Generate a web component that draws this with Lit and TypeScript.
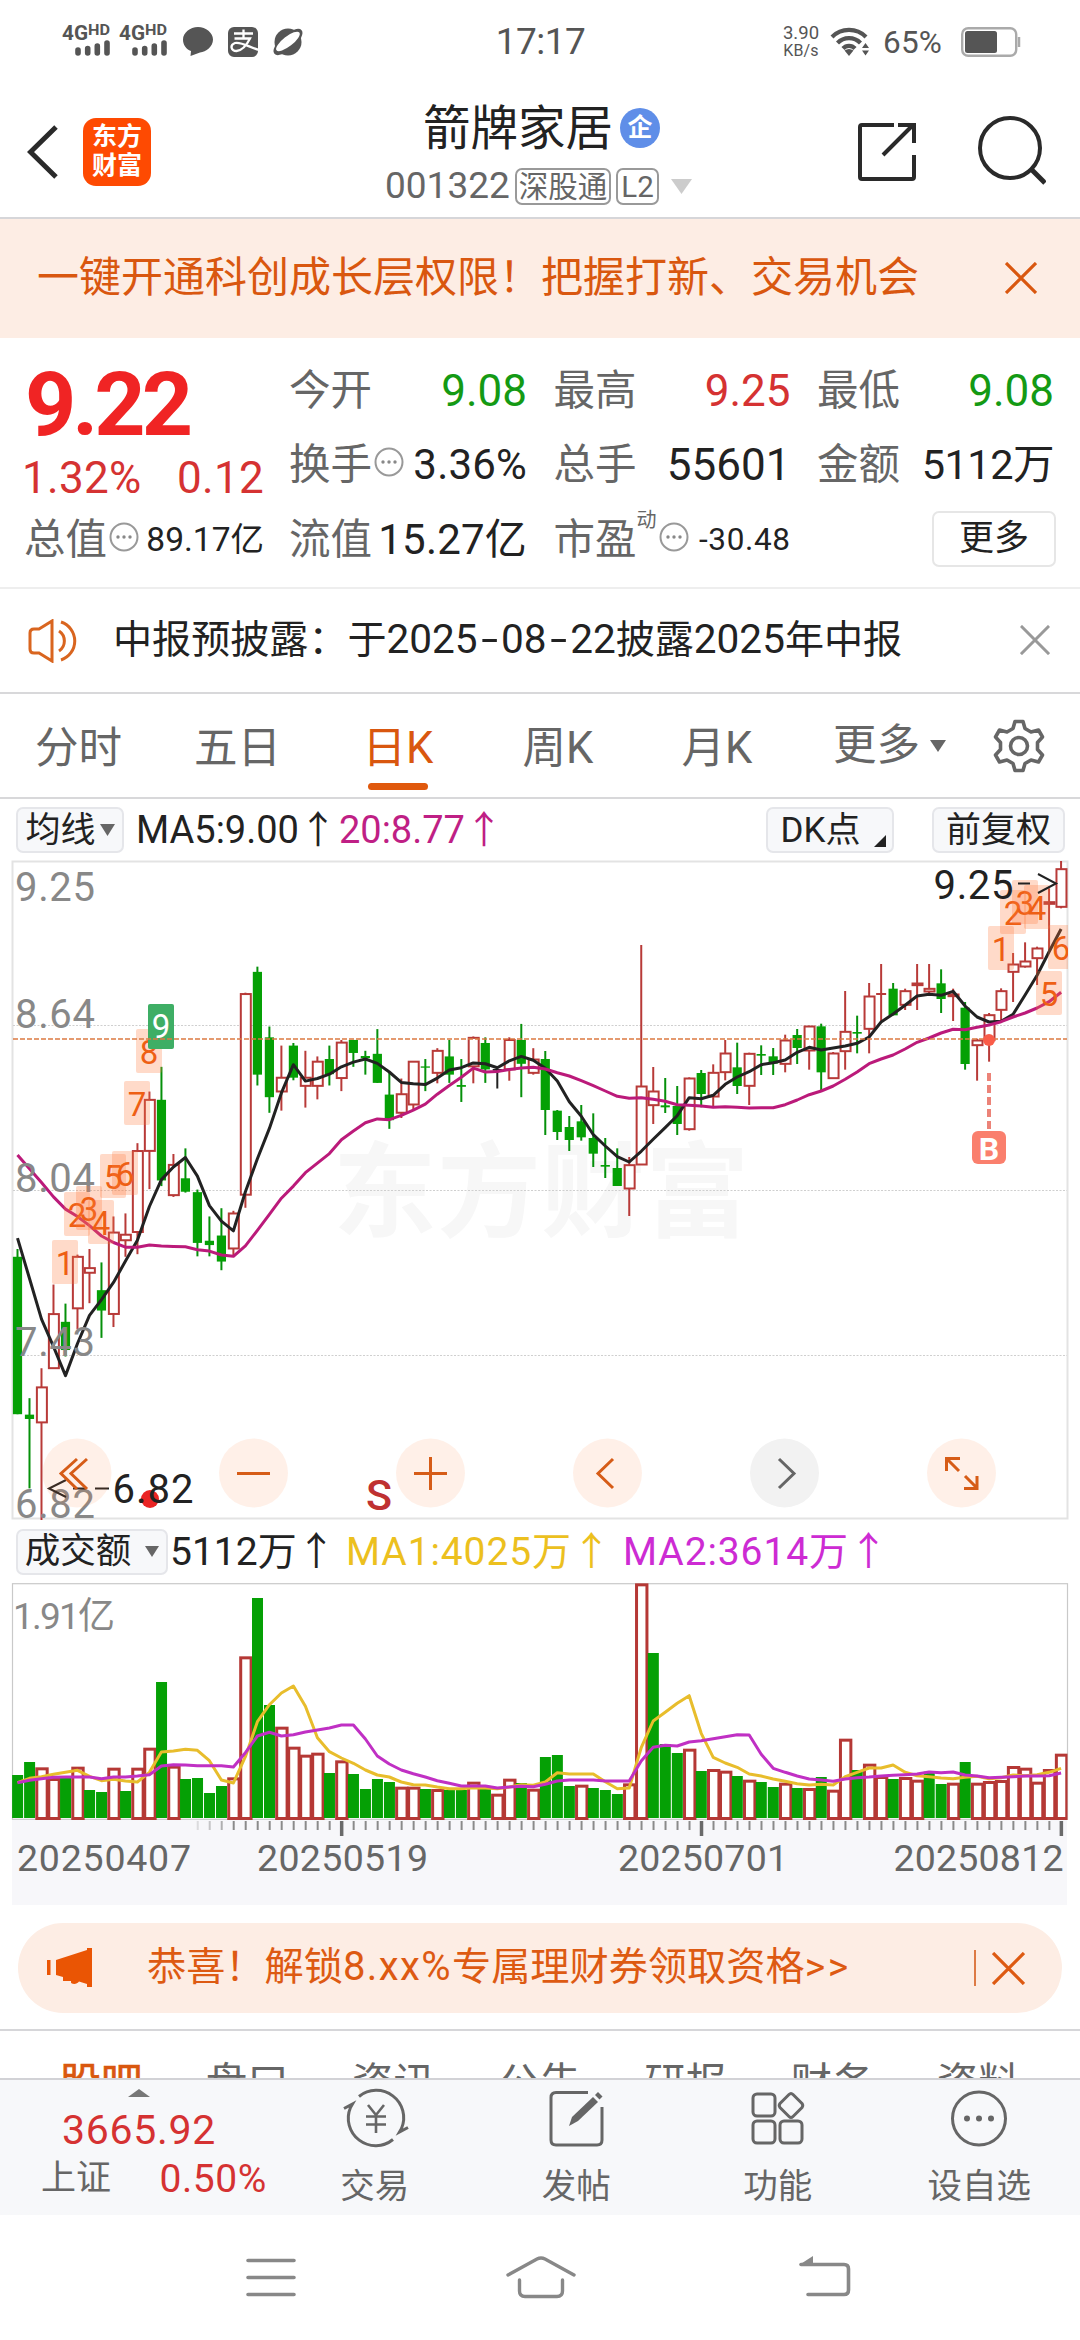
import { LitElement, html, svg, css } from "lit";
import { customElement } from "lit/decorators.js";

const STEP = 11.995;
const FIRST_X = 17.5;
const xAt = (i: number) => FIRST_X + i * STEP;

type Row = [string, number, number, number, number];
interface Candle { kind: string; high: number; top: number; bottom: number; low: number; }

// Sessions are kept as [kind, high, body top, body bottom, low] in grid units below the y = 850 line.
const UNIT_A = 0.43367;
const UNIT_B = 1 / 3;

const SESSIONS_A: Row[] = [
  ["g", 920, 938, 1301, 1301], ["g", 1264, 1302, 1312, 1472], ["r", 1195, 1238, 1321, 1545], ["r", 1002, 1069, 1196, 1196],
  ["g", 1046, 1088, 1153, 1168], ["r", 933, 937, 1058, 1105], ["r", 920, 963, 976, 1045], ["g", 951, 1015, 1062, 1125],
  ["r", 845, 881, 1071, 1100], ["r", 838, 886, 901, 938], ["r", 676, 693, 882, 932], ["r", 557, 575, 695, 782],
  ["g", 500, 576, 762, 775], ["r", 701, 725, 797, 800], ["g", 688, 757, 788, 790], ["g", 783, 789, 906, 937],
  ["g", 845, 901, 911, 937], ["g", 826, 889, 949, 969], ["r", 832, 837, 920, 934], ["r", 329, 331, 796, 825],
  ["g", 269, 281, 518, 543], ["g", 407, 432, 570, 606], ["r", 451, 524, 558, 601], ["g", 445, 451, 525, 531],
  ["r", 463, 524, 545, 594], ["r", 476, 487, 545, 575], ["g", 451, 482, 517, 543], ["r", 438, 443, 527, 556],
  ["g", 438, 438, 468, 500], ["g", 463, 475, 480, 518], ["g", 413, 470, 537, 537], ["g", 512, 564, 623, 643],
  ["r", 527, 562, 607, 618], ["r", 487, 487, 588, 600], ["g", 482, 499, 502, 556], ["r", 457, 462, 515, 538],
  ["g", 438, 476, 518, 537], ["g", 482, 542, 546, 581], ["r", 430, 432, 500, 538], ["g", 432, 445, 506, 537],
  ["k", 505, 505, 509, 550], ["r", 432, 437, 507, 532], ["g", 401, 438, 493, 570], ["r", 457, 482, 515, 518],
];
const SESSIONS_B: Row[] = [
  ["g", 603, 627, 780, 855], ["g", 780, 782, 846, 870], ["g", 798, 831, 870, 903], ["g", 765, 814, 862, 872],
  ["g", 790, 864, 911, 951], ["g", 864, 945, 950, 984], ["g", 895, 954, 1008, 1008], ["r", 921, 944, 1017, 1098],
  ["r", 285, 708, 945, 945], ["r", 651, 723, 767, 822], ["g", 684, 766, 772, 789], ["g", 708, 768, 822, 855],
  ["r", 682, 684, 839, 842], ["g", 660, 669, 732, 772], ["r", 643, 667, 741, 770], ["r", 570, 609, 668, 691],
  ["g", 578, 652, 708, 732], ["r", 608, 610, 709, 765], ["g", 586, 612, 617, 675], ["g", 594, 619, 641, 675],
  ["r", 554, 570, 643, 667], ["g", 537, 555, 594, 642], ["r", 527, 528, 603, 659], ["g", 521, 529, 667, 722],
  ["r", 606, 609, 686, 686], ["r", 423, 544, 605, 659], ["g", 497, 546, 551, 610], ["r", 399, 438, 538, 610],
  ["r", 342, 432, 432, 515], ["g", 399, 416, 496, 496], ["r", 416, 422, 466, 480], ["r", 342, 399, 407, 480],
  ["r", 342, 415, 426, 436], ["g", 358, 400, 447, 489], ["r", 416, 432, 440, 513], ["g", 456, 473, 642, 659],
  ["r", 566, 570, 587, 692], ["r", 489, 494, 572, 635], ["r", 415, 422, 481, 510], ["r", 309, 342, 367, 456],
  ["r", 277, 333, 351, 353], ["r", 290, 294, 326, 405], ["r", 115, 155, 163, 300], ["r", 33, 56, 172, 175],
];
const scaleRows = (rows: Row[], unit: number): Candle[] =>
  rows.map(([kind, high, top, bottom, low]) => ({
    kind, high: 850 + high * unit, top: 850 + top * unit, bottom: 850 + bottom * unit, low: 850 + low * unit,
  }));
const CANDLES = [...scaleRows(SESSIONS_A, UNIT_A), ...scaleRows(SESSIONS_B, UNIT_B)];

const MA5_A = [895, 988, 1082, 1145, 1212, 1138, 1073, 1037, 997, 948, 900, 822, 760, 731, 709, 752, 820, 856, 878, 788, 712, 642, 560, 495, 533, 527, 517, 500, 489, 482, 492, 512, 536, 539, 541, 526, 507, 502, 491, 493, 502, 486, 476, 485];
const MA5_B = [655, 693, 755, 799, 854, 888, 920, 936, 904, 868, 833, 797, 743, 746, 736, 703, 681, 665, 644, 638, 630, 607, 592, 600, 594, 588, 580, 561, 516, 492, 466, 438, 433, 436, 424, 468, 501, 516, 514, 493, 435, 376, 305, 237];
const MA20_A = [703, 735, 767, 800, 828, 845, 866, 890, 905, 916, 916, 911, 913, 914, 915, 922, 925, 934, 937, 913, 877, 840, 803, 775, 744, 722, 700, 668, 648, 629, 620, 622, 612, 600, 586, 563, 543, 524, 503, 512, 511, 506, 503, 501];
const MA20_B = [657, 668, 678, 692, 707, 723, 739, 745, 743, 748, 754, 764, 766, 768, 772, 770, 772, 774, 773, 773, 764, 750, 734, 723, 708, 688, 666, 641, 627, 615, 597, 577, 564, 549, 538, 539, 532, 525, 515, 501, 489, 474, 455, 427];
const joinLine = (a: number[], b: number[]) =>
  [...a.map((v) => 850 + v * UNIT_A), ...b.map((v) => 850 + v * UNIT_B)]
    .map((y, i) => `${xAt(i).toFixed(1)},${y.toFixed(1)}`).join(" ");

// Turnover bars: tops in thirds of a pixel below y = 1570, one letter of colour per session.
const VOL = [615, 576, 592, 624, 622, 590, 660, 666, 593, 663, 593, 533, 336, 587, 627, 624, 669, 648, 622, 259, 84, 405, 470, 530, 554, 548, 609, 571, 612, 657, 627, 636, 650, 650, 657, 657, 660, 660, 635, 657, 671, 626, 639, 656, 561, 555, 648, 644, 654, 660, 672, 640, 40, 249, 522, 549, 536, 603, 597, 602, 618, 629, 636, 651, 638, 654, 654, 621, 659, 506, 600, 581, 618, 627, 621, 629, 605, 642, 638, 576, 638, 633, 630, 588, 593, 635, 597, 551];
const VOL_KIND = [
  "ggrrgrggrg", "rrgrggggrr", "ggrrrrgrgg", "ggrrgrggrg", "rrgrgggrgg",
  "grrgggrgrr", "grggrgrgrr", "grrgrrggrg", "rrrrrrrr",
].join("");
const VMA1 = [638, 625, 620, 613, 607, 601, 619, 632, 628, 633, 636, 607, 546, 543, 538, 541, 572, 630, 639, 560, 455, 404, 369, 348, 409, 503, 545, 564, 580, 600, 615, 621, 636, 644, 645, 651, 656, 656, 653, 654, 656, 651, 644, 646, 636, 608, 612, 612, 612, 635, 656, 654, 533, 453, 427, 400, 377, 490, 562, 579, 592, 612, 618, 627, 634, 641, 645, 643, 645, 620, 607, 594, 594, 585, 607, 617, 620, 624, 626, 622, 619, 626, 623, 615, 617, 614, 607, 595];
const VMA2 = [638, 631, 626, 622, 621, 621, 621, 626, 621, 621, 618, 614, 588, 584, 585, 587, 587, 587, 591, 548, 498, 487, 498, 494, 486, 480, 474, 465, 465, 507, 558, 582, 600, 611, 621, 632, 640, 648, 648, 648, 654, 651, 649, 650, 643, 633, 630, 630, 630, 633, 633, 633, 573, 532, 526, 528, 516, 512, 506, 500, 494, 495, 553, 595, 607, 618, 627, 630, 634, 627, 623, 621, 618, 616, 614, 612, 606, 608, 606, 615, 618, 623, 622, 620, 618, 618, 617, 609];
const volLine = (v: number[]) => v.map((y, i) => `${xAt(i).toFixed(1)},${(1570 + y / 3).toFixed(1)}`).join(" ");

// [label, left, top]
const COUNTS: [string, number, number][] = [
  ["1", 52, 1240], ["2", 64, 1192], ["3", 76, 1186], ["4", 88, 1200], ["5", 100, 1154], ["6", 112, 1151], ["7", 124, 1081], ["8", 136, 1029],
  ["1", 988, 926], ["2", 1000, 890], ["3", 1012, 880], ["4", 1024, 885], ["5", 1036, 971], ["6", 1048, 925],
];

const FONT = css`Roboto, "Noto Sans CJK SC", sans-serif`;

@customElement("kline-chart")
class KlineChart extends LitElement {
  static styles = css`
    :host { display: block; height: 659px; }
    svg { display: block; overflow: visible; font-family: ${FONT}; }
    .frame { fill: none; stroke: #e3e3e3; stroke-width: 2; }
    .grid { stroke: #cfcfcf; stroke-width: 1; stroke-dasharray: 2 1.5; }
    .prev { stroke: #dc7a42; stroke-width: 1.3; stroke-dasharray: 5 2; }
    .mark { font-size: 103.5px; font-weight: 700; fill: #f7f7f7; }
    .g { fill: #05a005; stroke: none; }
    .gl { stroke: #05900a; stroke-width: 2; }
    .r { fill: #fff; stroke: #b83a38; stroke-width: 2; }
    .rl { stroke: #b83a38; stroke-width: 2; }
    .k { fill: #222; }
    .kl { stroke: #222; stroke-width: 2; }
    .ma5, .ma20 { fill: none; stroke-width: 3; stroke-linejoin: round; }
    .ma5 { stroke: #222; }
    .ma20 { stroke: #bb1a7a; }
    .axis { font-size: 40px; fill: #888; }
    .note { font-size: 40px; fill: #222; }
    .cell { fill: #ff7a3c; fill-opacity: 0.28; }
    .count { font-size: 33px; fill: #ee5f14; text-anchor: middle; }
    .nine { fill: #3eae65; }
    .nine-t { font-size: 33px; fill: #fff; text-anchor: middle; }
    .sell { font-size: 43px; font-weight: 500; fill: #bf3131; }
    .buy { fill: #fa7f6d; }
    .buy-t { font-size: 32px; font-weight: 700; fill: #fff; text-anchor: middle; }
    .buy-l { stroke: #ec8378; stroke-width: 4; stroke-dasharray: 8 4; }
    .btn { fill: #ff7a30; fill-opacity: 0.11; }
    .btn-off { fill: #f2f2f2; }
    .ico { fill: none; stroke: #d65c17; stroke-width: 3; }
    .ico-off { fill: none; stroke: #666; stroke-width: 3; }
  `;
  private candle(c: Candle, i: number) {
    const x = xAt(i);
    const h = Math.max(c.bottom - c.top, 1);
    if (c.kind === "r") {
      return svg`<line class="rl" x1=${x} x2=${x} y1=${c.high} y2=${c.low}></line>
        ${h < 1.5
          ? svg`<line class="rl" x1=${x - 5} x2=${x + 5} y1=${c.top} y2=${c.top}></line>`
          : svg`<rect class="r" x=${x - 4.6} y=${c.top + 0.5} width="10" height=${Math.max(h - 1, 1)}></rect>`}`;
    }
    return svg`<line class=${c.kind + "l"} x1=${x} x2=${x} y1=${c.high} y2=${c.low}></line>
      <rect class=${c.kind} x=${x - 4.6} y=${c.top} width="9.2" height=${h}></rect>`;
  }
  render() {
    const axis: [string, number][] = [["9.25", 900.5], ["8.64", 1027.5], ["8.04", 1191.5], ["7.43", 1356], ["6.82", 1517.5]];
    return html`<svg width="1080" height="659" viewBox="0 861 1080 659">
      <defs><clipPath id="c"><rect x="12" y="861" width="1056" height="659"></rect></clipPath></defs>
      <text class="mark" x="333" y="1229" textLength="416">东方财富</text>
      <rect class="frame" x="12.5" y="861.5" width="1055" height="657"></rect>
      ${[1025.5, 1190.5, 1355.5].map((y) => svg`<line class="grid" x1="13" x2="1067" y1=${y} y2=${y}></line>`)}
      ${CANDLES.map((c, i) => this.candle(c, i))}
      <polyline class="ma5" points=${joinLine(MA5_A, MA5_B)}></polyline>
      <polyline class="ma20" points=${joinLine(MA20_A, MA20_B)}></polyline>
      ${axis.map(([t, y]) => svg`<text class="axis" x="15" y=${y} textLength="80">${t}</text>`)}
      <g clip-path="url(#c)">
        ${COUNTS.map(([t, x, y]) => svg`<rect class="cell" x=${x} y=${y} width="26" height="44" rx="2"></rect>
          <text class="count" x=${x + 13} y=${y + 35}>${t}</text>`)}
      </g>
      <rect class="nine" x="148" y="1004" width="26" height="45" rx="2"></rect>
      <text class="nine-t" x="161" y="1038">9</text>
      <line class="prev" x1="13" x2="1067" y1="1039" y2="1039"></line>
      <text class="note" x="933.500" y="899" textLength="80">9.25</text>
      <path class="kl" fill="none" d="M1018 883.500H1030M1038 874L1056 883.500L1038 893"></path>
      <circle cx="150" cy="1499" r="9" fill="#ea2424"></circle>
      <text class="note" x="112.500" y="1503" textLength="81">6.82</text>
      <path class="kl" fill="none" d="M66 1480L49 1488.500L66 1497M73 1488.500H86M95 1488.500H109"></path>
      <text class="sell" x="366" y="1510">S</text>
      <line class="buy-l" x1="989" x2="989" y1="1073" y2="1129"></line>
      <circle cx="989" cy="1040" r="6" fill="#fa5c48"></circle>
      <rect class="buy" x="972" y="1131" width="34" height="33" rx="6"></rect>
      <text class="buy-t" x="989" y="1160">B</text>
      ${[77, 253.5, 430.5, 607.5, 784.5, 961.5].map((x, i) => svg`<circle class=${i === 4 ? "btn-off" : "btn"} cx=${x} cy="1473" r="34.500"></circle>`)}
      <path class="ico" d="M77 1459L61 1473.500L77 1489M87 1459L71 1473.500L87 1489"></path>
      <path class="ico" d="M237 1473.500H270"></path>
      <path class="ico" d="M414 1473.500H447M430.500 1457V1490"></path>
      <path class="ico" d="M613 1459L598 1473.500L613 1488"></path>
      <path class="ico-off" d="M779 1459L794 1473.500L779 1488"></path>
      <path class="ico" d="M960 1458.500H946.500V1471M947 1459L959 1471M964 1488.500H977V1476M977 1488L965 1476"></path>
    </svg>`;
  }
}

@customElement("volume-chart")
class VolumeChart extends LitElement {
  static styles = css`
    :host { display: block; height: 322px; }
    svg { display: block; font-family: ${FONT}; }
    .frame { fill: none; stroke: #c9c9c9; stroke-width: 1.2; }
    .axis { fill: #f7f7fa; }
    .g { fill: #05a005; }
    .r { fill: #fff; stroke: #b53835; stroke-width: 3; }
    .m1, .m2 { fill: none; stroke-width: 3; stroke-linejoin: round; }
    .m1 { stroke: #e8bd2c; }
    .m2 { stroke: #c030c4; }
    .tick { stroke: #8a8a8a; stroke-width: 2; }
    .tick-lg { stroke: #6a6a6a; stroke-width: 3.500; }
    .cap { font-size: 37px; fill: #888; }
    .date { font-size: 37.5px; fill: #666; }
  `;
  render() {
    const dates: [string, number, number][] = [["20250407", 17, 174], ["20250519", 257, 171], ["20250701", 618, 170], ["20250812", 893.5, 170]];
    return html`<svg width="1080" height="322" viewBox="0 1583 1080 322">
      <defs><clipPath id="v"><rect x="12" y="1583" width="1055.500" height="237"></rect></clipPath></defs>
      <rect class="axis" x="12" y="1820" width="1055" height="85"></rect>
      <rect class="frame" x="12.500" y="1583.700" width="1055" height="235.600"></rect>
      <text class="cap" x="13" y="1629" textLength="102">1.91亿</text>
      <g clip-path="url(#v)">
        ${VOL.map((v, i) => {
          const x = xAt(i), y = 1570 + v / 3;
          return VOL_KIND[i] === "r"
            ? svg`<rect class="r" x=${x - 4.7} y=${y + 1.5} width="10.400" height=${1817 - y}></rect>`
            : svg`<rect class="g" x=${x - 5.4} y=${y} width="11" height=${1818 - y}></rect>`;
        })}
        <polyline class="m1" points=${volLine(VMA1)}></polyline>
        <polyline class="m2" points=${volLine(VMA2)}></polyline>
      </g>
      ${VOL.map((_, i) => i < 15 ? null : i % 30 === 27
        ? svg`<line class="tick-lg" x1=${xAt(i) + 0.3} x2=${xAt(i) + 0.3} y1="1821" y2="1836"></line>`
        : svg`<line class="tick" opacity=${i < 18 ? 0.25 + (i - 15) * 0.2 : 1} x1=${xAt(i) + 0.3} x2=${xAt(i) + 0.3} y1="1821" y2="1830"></line>`)}
      ${dates.map(([t, x, w]) => svg`<text class="date" x=${x} y="1870.500" textLength=${w}>${t}</text>`)}
    </svg>`;
  }
}

const dots = html`<svg class="dots" width="30" height="30" viewBox="0 0 30 30"><circle cx="15" cy="15" r="13.500" fill="none" stroke="#999" stroke-width="2"></circle><g fill="#888"><circle cx="9" cy="15" r="1.700"></circle><circle cx="15" cy="15" r="1.700"></circle><circle cx="21" cy="15" r="1.700"></circle></g></svg>`;
const cross = (cls: string, size: number) => html`<svg class=${cls} width=${size} height=${size} viewBox="0 0 32 32"><path d="M1 1L31 31M31 1L1 31" fill="none" stroke="currentColor" stroke-width="3.200"></path></svg>`;
const caret = (w: number, h: number) => html`<svg class="caret" width=${w} height=${h} viewBox="0 0 14 12" preserveAspectRatio="none"><path d="M0 0H14L7 12Z" fill="currentColor"></path></svg>`;

@customElement("app-root")
class AppRoot extends LitElement {
  static styles = css`
    :host { display: block; width: 1080px; height: 2340px; overflow: hidden; background: #fff; color: #222; font-family: ${FONT}; line-height: 1.2; }
    * { box-sizing: border-box; }
    svg { display: block; flex: none; }
    div, span { white-space: nowrap; }
    .status { height: 90px; display: grid; grid-template-columns: 304px 472px 304px; padding-top: 27px; color: #555; }
    .status svg { overflow: visible; }
    .status svg text { font-weight: 700; }
    .clock { font-size: 37px; line-height: 30px; text-align: center; margin-left: 1px; letter-spacing: -0.5px; }
    .sys { display: flex; height: 30px; align-items: center; padding-left: 5px; }
    .rate { width: 40px; font-size: 18.5px; line-height: 16px; text-align: center; letter-spacing: 0; }
    .rate small { display: block; font-size: 16px; line-height: 17px; margin-top: 1px; letter-spacing: 0.2px; }
    .wifi { margin-left: 10px; }
    .pct { font-size: 31.5px; width: 67px; margin: 2px 11px 0 11px; line-height: 30px; letter-spacing: 0.2px; }

    .head { height: 129px; border-bottom: 2px solid #d6d6d9; display: grid; grid-template-columns: 150px 1fr 262px; }
    .brand { display: flex; padding: 28px 0 0 27px; }
    .back { margin: 7px 25px 0 0; }
    .logo { width: 68px; height: 68px; border-radius: 13px; background: #fe4a02; color: #fff; font-weight: 700; font-size: 25px; line-height: 29px; padding-top: 4px; text-align: center; flex: none; }
    .ident { display: flex; flex-direction: column; }
    .name { display: flex; align-items: center; height: 52px; margin: 13px 0 0 273px; font-size: 47.5px; line-height: 52px; }
    .corp { width: 40px; height: 40px; border-radius: 50%; background: #5f8ee8; color: #fff; font-size: 25px; font-weight: 700; line-height: 39px; text-align: center; margin-left: 7px; margin-top: -2px; }
    .code { display: flex; align-items: center; height: 38px; margin: 12px 0 0 235px; color: #666; font-size: 37px; }
    .code b { font-weight: 400; font-size: 29.5px; height: 37px; line-height: 34px; border: 2px solid #999; border-radius: 7px; margin-left: 5px; padding: 0 2px; letter-spacing: 0; }
    .code b + b { padding: 0 3px; }
    .code .caret { color: #ccc; margin-left: 12px; }
    .tools { display: flex; padding: 27px 0 0 40px; gap: 62px; }
    .tools svg + svg { margin-top: -1px; }

    .banner { height: 119px; background: #fdede4; color: #d9570f; display: flex; align-items: center; justify-content: space-between; padding: 0 43px 0 37px; font-size: 42px; }
    .banner .x { margin-top: -2px; }

    .quote { height: 251px; border-bottom: 2px solid #eee; display: grid; grid-template-columns: 240px 1fr; column-gap: 25px; padding: 16px 26px 0 24px; }
    .left { display: flex; flex-direction: column; }
    .price { height: 94px; padding-top: 7px; font-size: 89.5px; font-weight: 700; line-height: 88px; color: #f02424; letter-spacing: -4px; margin-left: 1px; }
    .chg { height: 54px; line-height: 61px; display: flex; justify-content: space-between; color: #d53232; font-size: 44px; letter-spacing: 0.3px; margin-left: -2px; }
    .cells { display: grid; grid-template-columns: 238px 237px 237px; column-gap: 26.5px; grid-template-rows: 74px 74px 76px; }
    .cell { display: flex; align-items: center; justify-content: space-between; font-size: 41.5px; color: #666; }
    .left .cell { height: 76px; }
    .cell b { font-weight: 400; font-size: 44px; color: #222; }
    .cell b.up { color: #d53232; }
    .cell b.down { color: #149a14; }
    .cell b.s42 { font-size: 42px; letter-spacing: 0.2px; }
    .cell b.s40 { font-size: 41.500px; letter-spacing: -0.5px; }
    .cell b.s33 { font-size: 33.5px; }
    .cell b.s30 { font-size: 31.5px; letter-spacing: 0.6px; }
    .lead { display: flex; align-items: center; margin-top: -1px; }
    .dots { margin: -5px 0 0 2px; }
    .dyn { font-size: 20px; line-height: 20px; margin-top: -38px; margin-left: 0; }
    .more { width: 124px; height: 56px; border: 2px solid #e6e6e6; border-radius: 7px; font-size: 35px; line-height: 51px; text-align: center; color: #222; margin-left: auto; align-self: center; margin-top: -3px; margin-right: -2px; }

    .notice { height: 105px; border-bottom: 2px solid #d8d8da; display: flex; align-items: center; padding: 0 30px 0 28px; font-size: 39.1px; letter-spacing: 0; }
    .notice .msg { margin-left: 31px; flex: 1; }
    .num { font-size: 40.500px; line-height: 1; }
    .dash { display: inline-block; width: 23.5px; text-align: center; transform: scaleX(1.5); }
    .notice .x { color: #999; margin-top: -1px; }

    .tabs { height: 105px; border-bottom: 2px solid #d8d8da; display: grid; grid-template-columns: 157px 161px 160px 160px 158px 172px 1fr; color: #666; font-size: 43.5px; }
    .tab { display: flex; flex-direction: column; align-items: center; height: 103px; line-height: 109px; position: relative; }
    .tab.on { color: #d9570f; }
    .tab.on::after { content: ""; width: 60px; height: 7px; border-radius: 4px; background: #e0590d; margin-top: -20px; }
    .tab.row { flex-direction: row; justify-content: flex-end; padding-right: 22px; gap: 10px; }
    .gear { margin: 25px 0 0 24px; }

    .mas { height: 62px; display: flex; align-items: center; padding-left: 16px; font-size: 38px; line-height: 46px; }
    .pill { height: 46px; border: 2px solid #e5e6ea; border-radius: 7px; background: #f7f8fa; font-size: 35px; line-height: 43px; display: flex; align-items: center; justify-content: center; flex: none; }
    .pill .caret { color: #666; }
    .w1 { width: 108px; gap: 4px; }
    .w2 { width: 128px; margin-left: auto; position: relative; padding-right: 19px; }
    .w3 { width: 133px; margin: 0 15px 0 38px; }
    .w4 { width: 152px; gap: 14px; font-size: 35.500px; }
    .nub { position: absolute; right: 6px; bottom: 4px; }
    .ma5 { margin-left: 12px; letter-spacing: 0; }
    .ma20 { color: #bf1f85; margin-left: 2px; }
    .turn { height: 63px; display: flex; align-items: center; padding-left: 16px; font-size: 39px; line-height: 46px; }
    .t0 { width: 176px; margin-left: 2px; }
    .t1 { width: 277px; color: #ecc01e; letter-spacing: 0.9px; }
    .t2 { color: #cd2bd3; letter-spacing: 0.9px; }

    .promo { height: 126px; border-bottom: 2px solid #d6d6d9; padding: 18px; }
    .strip { height: 90px; border-radius: 45px; background: #fdede4; color: #dd5a12; display: flex; align-items: center; padding: 0 37px 0 29px; font-size: 39.2px; }
    .strip .msg { margin-left: 52px; flex: 1; }
    .strip .rate8 { font-size: 40px; letter-spacing: 1.4px; line-height: 1; }
    .strip .go { letter-spacing: 2.5px; }
    .strip i { width: 2px; height: 36px; background: #dd7a45; margin-right: 16px; }
    .sections { height: 47px; overflow: hidden; display: grid; grid-template-columns: repeat(7, 146.2px); padding: 28px 0 0 28px; text-align: center; color: #666; font-size: 41.5px; line-height: 50px; }
    .sections .on { color: #d9570f; -webkit-text-stroke: 0.7px #d9570f; }

    .dock { height: 137px; background: #f7f8fa; border-top: 2px solid #d2d2d6; display: grid; grid-template-columns: 274px repeat(4, 201.5px); color: #666; }
    .index { display: flex; flex-direction: column; align-items: center; color: #d53232; padding: 9px 0 0 4px; }
    .index .val { font-size: 41px; line-height: 48px; margin-top: 9px; letter-spacing: 0.7px; }
    .index .sub { display: flex; justify-content: space-between; width: 226px; margin-left: 30px; font-size: 39px; line-height: 44px; margin-top: 3px; letter-spacing: 0.6px; }
    .index .sub span:first-child { color: #666; font-size: 35px; letter-spacing: 0; }
    .act { display: flex; flex-direction: column; align-items: center; padding-top: 9px; font-size: 34.5px; line-height: 46px; }
    .act svg { margin-bottom: 14px; overflow: visible; }
    .nav { height: 126px; display: grid; grid-template-columns: 246px 260px 293px 1fr; padding-top: 40px; }
    .nav svg { grid-row: 1; }
    .n1 { grid-column: 2; } .n2 { grid-column: 3; } .n3 { grid-column: 4; }
  `;
  private cell(label: string, value: string, cls = "", info = false) {
    return html`<div class="cell"><span class="lead">${label}${info ? dots : null}</span><b class=${cls}>${value}</b></div>`;
  }
  render() {
    const bars = (x: number) => svg`<path d=${`M${x} 23V26M${x + 9.7} 21.500V26M${x + 19.3} 19V26M${x + 29} 16V26`} stroke="#555" stroke-width="5.600" stroke-linecap="round"></path>`;
    return html`
      <div class="status">
        <svg width="304" height="32" viewBox="0 0 304 32" fill="#555">
          <text x="62" y="13" font-size="20" textLength="26" lengthAdjust="spacingAndGlyphs">4G</text><text x="88" y="8" font-size="14" textLength="22" lengthAdjust="spacingAndGlyphs">HD</text>
          <text x="119" y="13" font-size="20" textLength="26" lengthAdjust="spacingAndGlyphs">4G</text><text x="145" y="8" font-size="14" textLength="22" lengthAdjust="spacingAndGlyphs">HD</text>
          ${bars(78)}${bars(135)}
          <path d="M198 0C206 0 213 6 213 12.500C213 19.500 206 25 200 25.500L190.500 29L191 24C186 22 183 18 183 12.500C183 6 190 0 198 0Z"></path>
          <rect x="228" y="0" width="30" height="30" rx="6"></rect>
          <path d="M234 6.500H253M243.500 2.500V11.500M234.500 11.500H250C247 17.500 242 23.500 236.500 24C231 24 229.500 18 235 16C241 14.500 249 20 259 23" fill="none" stroke="#fff" stroke-width="2.300"></path>
          <ellipse cx="288" cy="15" rx="18" ry="7.500" transform="rotate(-41 288 15)"></ellipse>
          <circle cx="288" cy="15" r="13.500"></circle>
          <ellipse cx="288.300" cy="14.500" rx="14.500" ry="5" transform="rotate(-38 288 15)" fill="#fff"></ellipse>
        </svg>
        <div class="clock">17:17</div>
        <div class="sys">
          <div class="rate">3.90<small>KB/s</small></div>
          <svg class="wifi" width="41" height="28" viewBox="0 0 41 28"><g fill="none" stroke="#555" stroke-width="4.200"><path d="M1 9A24 24 0 0 1 35 9M6.500 15A16 16 0 0 1 29.500 15M12 20.500A8 8 0 0 1 24 20.500"></path></g><path d="M13.500 22.500Q18 19.500 22.500 22.500L18 28Z" fill="#555"></path><path d="M31 20L34.500 15L38 20ZM31 22.500H38L34.500 27.500Z" fill="#555"></path></svg>
          <div class="pct">65%</div>
          <svg width="60" height="30" viewBox="0 0 60 30"><rect x="1.200" y="1.200" width="54" height="27.600" rx="6" fill="none" stroke="#aaa" stroke-width="2.400"></rect><rect x="4" y="4" width="32" height="22" rx="2.500" fill="#555"></rect><path d="M58 10V20" stroke="#aaa" stroke-width="2.500"></path></svg>
        </div>
      </div>

      <div class="head">
        <div class="brand">
          <svg class="back" width="31" height="54" viewBox="0 0 31 54"><path d="M29 2L3.500 27L29 52" fill="none" stroke="#2a2a2a" stroke-width="5"></path></svg>
          <div class="logo">东方<br />财富</div>
        </div>
        <div class="ident">
          <div class="name">箭牌家居<span class="corp">企</span></div>
          <div class="code">001322<b>深股通</b><b>L2</b>${caret(21, 15)}</div>
        </div>
        <div class="tools">
          <svg width="58" height="64" viewBox="0 0 58 64" fill="none" stroke="#2a2a2a" stroke-width="4"><path d="M36 8H4Q2 8 2 10V60Q2 62 4 62H54Q56 62 56 60V38M25 38L55 8M40 8H56V26"></path></svg>
          <svg width="68" height="69" viewBox="0 0 68 69" fill="none" stroke="#2a2a2a" stroke-width="4"><circle cx="32" cy="32" r="30"></circle><path d="M53 53L67 67" stroke-width="5"></path></svg>
        </div>
      </div>

      <div class="banner"><span>一键开通科创成长层权限！把握打新、交易机会</span>${cross("x", 32)}</div>

      <div class="quote">
        <div class="left">
          <div class="price">9.22</div>
          <div class="chg"><span>1.32%</span><span>0.12</span></div>
          ${this.cell("总值", "89.17亿", "s33", true)}
        </div>
        <div class="cells">
          ${this.cell("今开", "9.08", "down")}${this.cell("最高", "9.25", "up")}${this.cell("最低", "9.08", "down")}
          ${this.cell("换手", "3.36%", "s42", true)}${this.cell("总手", "55601")}${this.cell("金额", "5112万", "s40")}
          ${this.cell("流值", "15.27亿", "s42")}
          <div class="cell"><span class="lead">市盈<span class="dyn">动</span>${dots}</span><b class="s30">-30.48</b></div>
          <div class="more">更多</div>
        </div>
      </div>

      <div class="notice">
        <svg width="54" height="44" viewBox="0 0 54 44" fill="none" stroke="#d9651f" stroke-width="3"><path d="M11 10L24 2V42L11 34H6Q2 34 2 30V14Q2 10 6 10Z"></path><path d="M31 12A12 12 0 0 1 31 32M33 3A20 20 0 0 1 33 41"></path></svg>
        <span class="msg">中报预披露：于<span class="num">2025<span class="dash">-</span>08<span class="dash">-</span>22</span>披露<span class="num">2025</span>年中报</span>${cross("x", 30)}
      </div>

      <div class="tabs">
        <div class="tab">分时</div><div class="tab">五日</div><div class="tab on">日K</div><div class="tab">周K</div><div class="tab">月K</div>
        <div class="tab row">更多${caret(16, 12)}</div>
        <svg class="gear" width="54" height="54" viewBox="0 0 54 54" fill="none" stroke="#666" stroke-width="3.600" stroke-linejoin="round"><circle cx="27" cy="27" r="8.500"></circle><path d="M23 2.500H31L33 9.500L39 13L46.500 11L50.500 18L45.500 23.500V30.500L50.500 36L46.500 43L39 41L33 44.500L31 51.500H23L21 44.500L15 41L7.500 43L3.500 36L8.500 30.500V23.500L3.500 18L7.500 11L15 13L21 9.500Z"></path></svg>
      </div>

      <div class="mas">
        <div class="pill w1">均线${caret(15, 12)}</div>
        <span class="ma5">MA5:9.00↑</span><span class="ma20">20:8.77↑</span>
        <div class="pill w2">DK点<svg class="nub" width="12" height="12"><path d="M12 0V12H0Z" fill="#222"></path></svg></div>
        <div class="pill w3">前复权</div>
      </div>
      <kline-chart></kline-chart>
      <div class="turn">
        <div class="pill w4">成交额${caret(14, 11)}</div>
        <span class="t0">5112万↑</span><span class="t1">MA1:4025万↑</span><span class="t2">MA2:3614万↑</span>
      </div>
      <volume-chart></volume-chart>

      <div class="promo"><div class="strip">
        <svg width="48" height="40" viewBox="0 0 48 40" fill="#ea5504"><path d="M0 12H3.500V27H0ZM9 12L40 2V0H45V39H40V36L32 33.500C30 37 24 36 24 34.500V33H16V29L9 27Z"></path></svg>
        <span class="msg">恭喜！解锁<span class="rate8">8.xx%</span>专属理财券领取资格<span class="go">&gt;&gt;</span></span><i></i>${cross("x", 33)}
      </div></div>
      <div class="sections"><span class="on">股吧</span><span>盘口</span><span>资讯</span><span>公告</span><span>研报</span><span>财务</span><span>资料</span></div>

      <div class="dock">
        <div class="index">
          <svg width="22" height="8" viewBox="0 0 22 8"><path d="M0 8L11 0L22 8Z" fill="#777"></path></svg>
          <div class="val">3665.92</div>
          <div class="sub"><span>上证</span><span>0.50%</span></div>
        </div>
        <div class="act"><svg width="66" height="60" viewBox="0 0 66 60" fill="none" stroke="#666" stroke-width="3"><path d="M17 7.500A27.400 27.400 0 0 1 59.500 39.500L57.500 43L66 38.500M51 50.500A27.400 27.400 0 0 1 8.500 18.500L10.500 15L2 19.500"></path><path d="M26 16L34 26L42 16M34 26V44M24 27.500H44M24 35.500H44" stroke-width="2.600"></path></svg>交易</div>
        <div class="act"><svg width="56" height="60" viewBox="0 0 56 60" fill="none" stroke="#666" stroke-width="3"><path d="M40 3.500H8Q3 3.500 3 8.500V51Q3 56 8 56H49Q54 56 54 51V18"></path><path d="M21 37L24 28L45 8L50 13L30 32Z" fill="#666" stroke="none"></path><path d="M47 6L50 3L54.500 7.500L51.500 10.500Z" fill="#666" stroke="none"></path></svg>发帖</div>
        <div class="act"><svg width="54" height="60" viewBox="0 0 54 60" fill="none" stroke="#666" stroke-width="3"><rect x="2" y="5" width="22" height="22" rx="4"></rect><rect x="2" y="32" width="22" height="22" rx="4"></rect><rect x="29" y="32" width="22" height="22" rx="4"></rect><path d="M38 5.500Q40 3.500 42 5.500L51 14.500Q52.500 16.500 51 18.500L42 27.500Q40 29.500 38 27.500L29 18.500Q27.500 16.500 29 14.500Z"></path></svg>功能</div>
        <div class="act"><svg width="58" height="60" viewBox="0 0 58 60"><circle cx="29" cy="29.500" r="26.500" fill="none" stroke="#666" stroke-width="3"></circle><g fill="#666"><circle cx="17" cy="29.500" r="3"></circle><circle cx="29" cy="29.500" r="3"></circle><circle cx="41" cy="29.500" r="3"></circle></g></svg>设自选</div>
      </div>

      <div class="nav">
        <svg class="n1" width="50" height="44" viewBox="0 0 50 44"><path d="M2 5.500H48M2 22.500H48M2 39.500H48" stroke="#888" stroke-width="3.600" stroke-linecap="round"></path></svg>
        <svg class="n2" width="70" height="44" viewBox="0 0 70 44" fill="none" stroke="#888" stroke-width="3.400" stroke-linecap="round"><path d="M2 20L31 4Q35 2 39 4L68 20M13.500 25V36Q13.500 41.500 19 41.500H51Q56.500 41.500 56.500 36V25"></path></svg>
        <svg class="n3" width="52" height="44" viewBox="0 0 52 44" fill="none" stroke="#888" stroke-width="3.600"><path d="M2 9.500H45Q49.500 9.500 49.500 14V35Q49.500 39.500 45 39.500H9" stroke-linecap="round"></path><path d="M0 10L14 1V10Z" fill="#888" stroke="none"></path></svg>
      </div>`;
  }
}
